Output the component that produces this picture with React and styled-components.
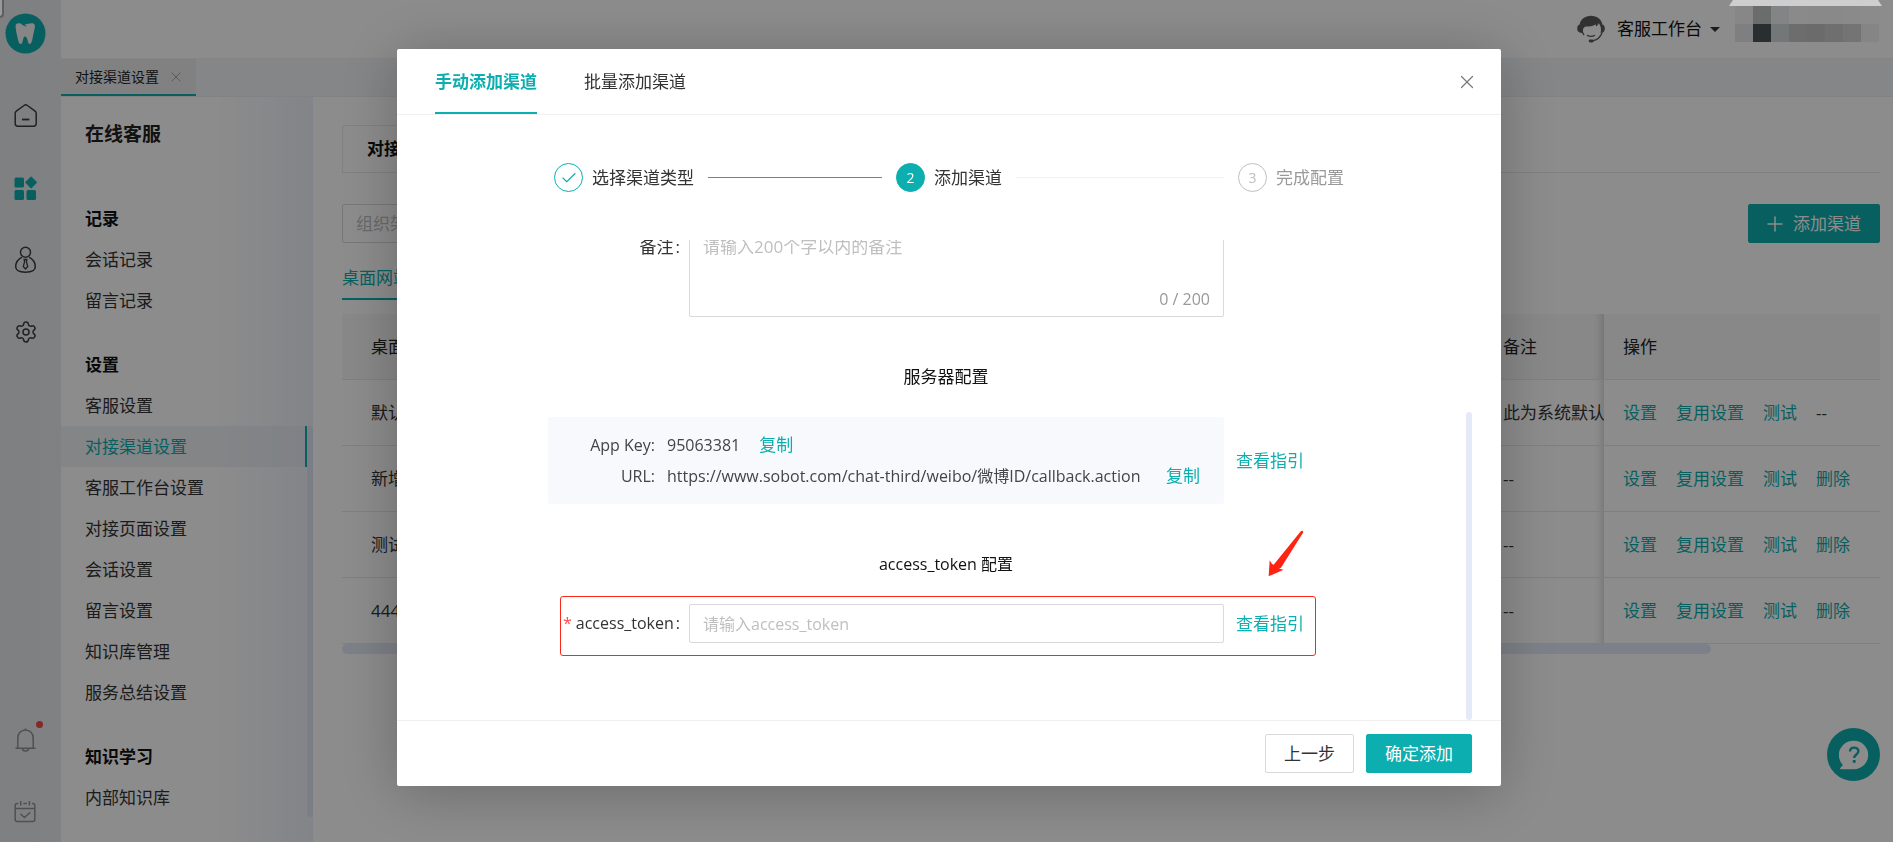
import React from 'react'
import styled, { createGlobalStyle, css } from 'styled-components'
import { Check, Plus, Settings, X } from 'lucide-react'

const PRIMARY = '#0daeaf'
const SCROLLBAR = '#e4eaf7'

const GlobalStyle = createGlobalStyle`
  * {
    box-sizing: border-box;
  }

  body {
    margin: 0;
    overflow: hidden;
    background: #fff;
    color: #333;
    font-family: 'Open Sans', 'Noto Sans CJK SC', sans-serif;
    font-size: 17px;
    line-height: 24px;
  }

  button, input, textarea {
    font: inherit;
    color: inherit;
  }

  button {
    padding: 0;
    border: 0;
    background: none;
    cursor: pointer;
  }

  a {
    color: ${PRIMARY};
    text-decoration: none;
    white-space: nowrap;
  }

  svg {
    display: block;
  }
`

/* ---------- page shell ---------- */

const Shell = styled.div`
  display: flex;
  height: 100vh;
`

const Rail = styled.aside`
  display: flex;
  flex: 0 0 61px;
  flex-direction: column;
  align-items: center;
  padding: 13px 10px 18px 0;
  background: linear-gradient(90deg, #e7e9eb, #e9ebed);
`

const RailGroup = styled.nav`
  display: flex;
  flex-direction: column;
  gap: 48px;
  margin-top: ${(p) => (p.$bottom ? 'auto' : '50px')};
`

const RailButton = styled.button`
  position: relative;
  width: 24px;
  height: 24px;
  color: ${(p) => (p.$active ? PRIMARY : p.$muted ? '#8f9294' : '#3c3d3f')};
`

const Dot = styled.span`
  position: absolute;
  top: -7px;
  right: -5px;
  width: 7px;
  height: 7px;
  border-radius: 50%;
  background: #fa4646;
`

const Column = styled.div`
  display: flex;
  flex: 1;
  flex-direction: column;
  min-width: 0;
`

const TopBar = styled.header`
  display: flex;
  flex: 0 0 59px;
  align-items: center;
  justify-content: flex-end;
  padding-right: 14px;
  border-bottom: 1px solid #f0f1f3;
`

const Workbench = styled.button`
  display: flex;
  align-items: center;
  gap: 12px;
  margin-right: 15px;
  color: #111;
`

const Caret = styled.span`
  border: 5px solid transparent;
  border-top-color: #333;
  border-bottom: 0;
  margin-left: -4px;
`

const Mosaic = styled.div`
  display: grid;
  grid-template-columns: repeat(8, 18px);
  grid-auto-rows: 18px;
  margin-top: -10px;
`

const Tile = styled.span`
  background: ${(p) => p.$color};
`

const TabStrip = styled.div`
  display: flex;
  flex: 0 0 37px;
  border-bottom: 1px solid #e9edf2;
  background: #f1f4f8;
`

const PageTab = styled.div`
  display: flex;
  align-items: center;
  gap: 9px;
  height: 37px;
  padding: 0 12px 0 14px;
  border-bottom: 2px solid ${PRIMARY};
  background: #ebeced;
  font-size: 14px;
  color: #222;
`

const CloseIcon = styled(X)`
  color: ${(p) => p.$tone};
`

const Main = styled.div`
  display: flex;
  flex: 1;
  min-height: 0;
`

/* ---------- side menu ---------- */

const Menu = styled.aside`
  display: flex;
  flex: 0 0 252px;
  background: linear-gradient(90deg, #fff 62%, #eef1fa 100%);
`

const MenuScroll = styled.nav`
  flex: 1;
  overflow: hidden;
`

const Thumb = styled.div`
  flex: 0 0 6px;
  margin: 329px 0 25px;
  border-radius: 3px;
  background: #e1e6f5;
`

const MenuTitle = styled.h1`
  margin: 23px 0 50px;
  padding-left: 24px;
  font-size: 19px;
  line-height: 28px;
  color: #222;
`

const MenuSection = styled.section`
  margin-bottom: 23px;
`

const MenuHeading = styled.h2`
  margin: 0;
  padding-left: 24px;
  font-size: 17px;
  line-height: 41px;
  color: #111;
`

const MenuLink = styled.a`
  display: block;
  padding-left: 24px;
  border-right: 2px solid transparent;
  line-height: 41px;
  color: #333;

  ${(p) =>
    p.$active &&
    css`
      border-color: ${PRIMARY};
      background: rgba(223, 230, 238, 0.5);
      color: ${PRIMARY};
    `}
`

/* ---------- channel list ---------- */

const Content = styled.main`
  flex: 1;
  min-width: 0;
  padding: 28px 13px 0 29px;
`

const CardTabs = styled.div`
  display: flex;
  border-bottom: 1px solid #e9e9e9;
`

const CardTab = styled.button`
  height: 47px;
  padding: 0 24px;
  border: 1px solid #e9e9e9;
  border-bottom: 0;
  border-radius: 3px 3px 0 0;
  font-weight: 700;
  color: #111;
`

const Toolbar = styled.div`
  display: flex;
  justify-content: space-between;
  margin-top: 31px;
`

const controlBox = css`
  height: 39px;
  border: 1px solid #d9d9d9;
  border-radius: 2px;
  outline: 0;
  background: #fff;

  &::placeholder {
    color: #bfbfbf;
  }
`

const SearchInput = styled.input`
  ${controlBox}
  width: 240px;
  padding: 0 13px;
`

const Button = styled.button`
  display: flex;
  align-items: center;
  gap: 10px;
  height: 39px;
  padding: 0 18px;
  border: 1px solid ${(p) => (p.$primary ? PRIMARY : '#d9d9d9')};
  border-radius: 2px;
  background: ${(p) => (p.$primary ? PRIMARY : '#fff')};
  color: ${(p) => (p.$primary ? '#fff' : '#333')};
`

// trims the empty rim of the glyph
const PlusIcon = styled(Plus)`
  margin: 0 -4px;
`

const TypeTabs = styled.div`
  display: flex;
  margin-top: 22px;
`

const TypeTab = styled.button`
  height: 35px;
  padding-bottom: 8px;
  border-bottom: 2px solid ${PRIMARY};
  color: ${PRIMARY};
`

const Table = styled.table`
  width: 100%;
  margin-top: 14px;
  border-collapse: separate;
  border-spacing: 0;
  table-layout: fixed;

  th, td {
    height: 66px;
    padding: 0 0 0 29px;
    overflow: hidden;
    border-bottom: 1px solid #e8e8e8;
    text-align: left;
    font-weight: 400;
    white-space: nowrap;
  }

  th {
    background: #f7f7f7;
    color: #222;
  }

  th:nth-child(2), td:nth-child(2) {
    width: 130px;
    box-shadow: inset -10px 0 8px -8px rgba(0, 0, 0, 0.18);
  }

  th:last-child, td:last-child {
    width: 276px;
    padding-left: 19px;
  }
`

const Actions = styled.div`
  display: flex;
  gap: 19px;
`

const TableThumb = styled.div`
  width: 89%;
  height: 10px;
  border-radius: 5px;
  background: ${SCROLLBAR};
`

const HelpButton = styled.button`
  position: fixed;
  right: 13px;
  bottom: 61px;
  display: grid;
  place-items: center;
  width: 53px;
  height: 53px;
  border-radius: 50%;
  background: ${PRIMARY};
  color: #fff;
`

/* ---------- dialog ---------- */

const Mask = styled.div`
  position: fixed;
  inset: 0;
  display: flex;
  justify-content: center;
  padding: 49px 0 56px 5px;
  background: rgba(0, 0, 0, 0.45);
`

const Dialog = styled.div`
  display: flex;
  flex-direction: column;
  width: min(1104px, 92vw);
  border-radius: 2px;
  background: #fff;
  box-shadow: 0 6px 60px rgba(0, 0, 0, 0.25);
`

const DialogHeader = styled.header`
  display: flex;
  flex: 0 0 66px;
  gap: 47px;
  padding: 0 23px 0 38px;
  border-bottom: 1px solid #f0f0f0;
`

const DialogTab = styled.button`
  border-top: 2px solid transparent;
  border-bottom: 2px solid ${(p) => (p.$active ? PRIMARY : 'transparent')};
  font-weight: ${(p) => (p.$active ? 700 : 400)};
  color: ${(p) => (p.$active ? PRIMARY : '#333')};
`

const CloseButton = styled.button`
  margin-left: auto;
`

const Steps = styled.ol`
  display: flex;
  margin: 0;
  padding: 48px 157px;
  list-style: none;
`

const Step = styled.li`
  display: flex;
  flex: 1;
  align-items: center;
  gap: 9px;
  color: ${(p) => (p.$status === 'wait' ? '#999' : '#333')};

  &:last-child {
    flex: none;
  }

  &:not(:last-child)::after {
    content: '';
    flex: 1;
    height: 1px;
    margin: 0 14px 0 5px;
    background: ${(p) => (p.$status === 'done' ? PRIMARY : '#f0f0f0')};
  }
`

const StepMark = styled.span`
  display: grid;
  place-items: center;
  width: 29px;
  height: 29px;
  border: 1px solid ${(p) => (p.$status === 'wait' ? '#bfbfbf' : PRIMARY)};
  border-radius: 50%;
  background: ${(p) => (p.$status === 'active' ? PRIMARY : '#fff')};
  font-size: 14px;
  color: ${(p) => ({ done: PRIMARY, active: '#fff', wait: '#bfbfbf' })[p.$status]};
`

const DialogBody = styled.div`
  display: flex;
  flex: 1;
  justify-content: space-between;
  min-height: 0;
  padding: 0 29px 0 151px;
  overflow: hidden;
`

// anchored to its end, so the first field is scrolled partly out of view
const Form = styled.form`
  display: flex;
  flex: 0 1 796px;
  flex-direction: column;
  justify-content: flex-end;
  padding-bottom: 77px;
`

const BodyThumb = styled.div`
  width: 6px;
  margin-top: 172px;
  border-radius: 3px;
  background: ${SCROLLBAR};
`

const FieldRow = styled.div`
  position: relative;
  display: flex;
  align-items: ${(p) => (p.$top ? 'flex-start' : 'center')};
`

const Label = styled.label`
  flex: 0 0 141px;
  padding-right: 9px;
  font-size: ${(p) => (p.$latin ? '16px' : '17px')};
  line-height: 39px;
  text-align: right;
  white-space: nowrap;

  &::after {
    content: ':';
    margin-left: 2px;
  }
`

const Required = styled.span`
  margin-right: 4px;
  color: #ff4d4f;
`

const Control = styled.div`
  position: relative;
  flex: 0 1 535px;
`

const TextInput = styled.input`
  ${controlBox}
  display: block;
  width: 100%;
  padding: 0 13px;
  font-size: 16px;
`

const TextArea = styled.textarea`
  ${controlBox}
  display: block;
  width: 100%;
  height: 90px;
  padding: 7px 13px;
  resize: none;
`

const Counter = styled.span`
  position: absolute;
  right: 14px;
  bottom: 6px;
  font-size: 16px;
  color: #999;
`

const Guide = styled.a`
  margin-left: 12px;
`

const GroupTitle = styled.h3`
  margin: 48px 0 28px;
  font-size: ${(p) => (p.$latin ? '16px' : '17px')};
  font-weight: 400;
  line-height: 24px;
  text-align: center;
  color: #111;
`

const ServerBox = styled.dl`
  display: grid;
  flex: 0 1 676px;
  grid-template-columns: 107px 1fr;
  grid-auto-rows: 31px;
  column-gap: 12px;
  align-items: center;
  height: 87px;
  margin: 0;
  padding: 12px 24px 13px 0;
  border-radius: 2px;
  background: #f7f9fd;
  font-size: 16px;
`

const Term = styled.dt`
  text-align: right;
  color: #444;
`

const Value = styled.dd`
  display: flex;
  gap: 19px;
  margin: 0;
  justify-content: ${(p) => (p.$spread ? 'space-between' : 'flex-start')};
  white-space: nowrap;
  color: #444;
`

const CopyButton = styled.button`
  font-size: 17px;
  color: ${PRIMARY};
`

const Highlight = styled.span`
  position: absolute;
  top: -8px;
  right: 28px;
  bottom: -13px;
  left: 12px;
  border: 1px solid #fb2817;
  border-radius: 3px;
  pointer-events: none;
`

const Arrow = styled.svg`
  position: absolute;
  right: 39px;
  bottom: 64px;
`

const DialogFooter = styled.footer`
  display: flex;
  flex: 0 0 66px;
  align-items: center;
  justify-content: flex-end;
  gap: 12px;
  padding: 0 29px;
  border-top: 1px solid #f0f0f0;
`

/* ---------- window edges above the mask ---------- */

const TopNotch = styled.div`
  position: fixed;
  top: 0;
  right: 11px;
  width: 153px;
  height: 6px;
  background: #cecece;
  clip-path: polygon(4px 0, 149px 0, 100% 100%, 0 100%);
`

const CornerNotch = styled.div`
  position: fixed;
  top: 0;
  left: 0;
  width: 4px;
  height: 18px;
  border-right: 2px solid #5f5f5f;
  border-bottom: 2px solid #5f5f5f;
  border-radius: 0 0 4px 0;
  background: #999;
`

/* ---------- icons ---------- */

const LogoIcon = () => (
  <svg width="41" height="41" viewBox="0 0 41 41" aria-hidden="true">
    <circle cx="20.5" cy="20.5" r="20" fill={PRIMARY} />
    <path
      d="M10.6 13.6C10.3 10.2 13 9.6 15.6 10.6c1.500 1.400 3.800 2.600 6.600 3.200-1.300-.9-2.200-1.500-2.600-2.200 3.200-.5 5.200-1.700 8-1.300 2 .3 2.600 2 2.200 4.300-.3 2.400-1 4.500-1.500 7-.8 3.800-1.300 9.400-3.500 9.400-2.400 0-1.800-7.600-4.800-7.600-2.700 0-1.600 7.600-4.200 7.600-2.600 0-3-6.200-3.900-9.300-.6-2.700-1.100-4.800-1.300-8.100z"
      fill="#f4f4f4"
    />
  </svg>
)

const HomeIcon = () => (
  <svg width="24" height="24" viewBox="0 0 24 24" fill="none" stroke="currentColor" strokeWidth="1.5">
    <path d="M1.2 9.2c0-.9.4-1.6 1.1-2.1L10 1.5c1-.8 2.4-.8 3.4 0l7.7 5.6c.7.5 1.1 1.2 1.1 2.1V19.6c0 1.6-1 2.7-2.6 2.7H3.800c-1.600 0-2.600-1.100-2.600-2.700z" />
    <path d="M8 15.5h7.4" strokeWidth="1.8" />
  </svg>
)

const AppsIcon = () => (
  <svg width="24" height="24" viewBox="0 0 24 24" fill="currentColor">
    <rect x="0.5" y="1.5" width="9.5" height="10" rx="1.5" />
    <rect x="0.5" y="14" width="9.5" height="10" rx="1.5" />
    <rect x="12.5" y="14" width="9.5" height="10" rx="1.5" />
    <rect x="12.7" y="2" width="8.8" height="8.8" rx="1" transform="rotate(45 17.1 6.4)" />
  </svg>
)

const PersonIcon = () => (
  <svg width="24" height="24" viewBox="0 2 24 24" overflow="visible" fill="none" stroke="currentColor" strokeWidth="1.5">
    <circle cx="11.5" cy="6.3" r="5" />
    <path d="M8 11.2C4 13.200 1.700 16.800 1.700 20.800c0 3.800 4 5.400 9.800 5.400s9.800-1.600 9.800-5.400c0-4-2.300-7.600-6.300-9.600" />
    <path d="M10.100 13.500h2.800l-.5 2.200 1.300 4.800-2.200 2.500-2.200-2.500 1.300-4.800z" strokeWidth="1.3" />
  </svg>
)

const BellIcon = () => (
  <svg width="24" height="24" viewBox="0 0 24 24" fill="none" stroke="currentColor" strokeWidth="1.5">
    <path d="M1.500 20.200h20M3.800 20V10.200C3.800 5.400 7 2 11.500 2s7.700 3.400 7.700 8.200V20M11.500 2V.5M8.500 20.500c0 3.400 6 3.400 6 0" />
  </svg>
)

const CalendarIcon = () => (
  <svg width="24" height="24" viewBox="0 0 24 24" fill="none" stroke="currentColor" strokeWidth="1.5">
    <path d="M4.300 3.500H3.200C2 3.500 1.200 4.300 1.200 5.500V19.500c0 1.300.8 2 2 2h15.600c1.300 0 2-.7 2-2V5.500c0-1.200-.7-2-2-2h-.9M9.300 3.500h3.700M1.200 8.600h19.600M6.700 1v4.600M15.400 1v4.600M6.400 13.800l4 3.700 5.900-5.200" />
  </svg>
)

const AgentIcon = () => (
  <svg width="28" height="28" viewBox="0 0 28 28" aria-hidden="true">
    <path
      d="M2.600 9.600C3.400 4.400 8 .8 14 .8s10.600 3.600 11.400 8.800c1.600.5 2.400 1.700 2.400 4s-.8 3.600-2.300 4.100l-1.900.2c.9-4.400.3-6.500-1.900-9.800-.5 1.700-1.300 2.700-2.600 3.400-.4-.6-.3-1.300-.3-2.200-2.700 2.200-6.500 2.300-10.300 2.300-2.400 1-3 3-2.300 6.700l-2.600-.5C1.100 17.400.2 16 .2 13.600s.8-3.600 2.400-4z"
      fill="#5a5a5a"
    />
    <path d="M5.500 17.500c.4 1 .9 1.800 1.600 2.500M10 20.300c2.400 1.400 5.600 1.400 8 0M25 17.800c-1.600 4.600-5 7.400-9.600 8" fill="none" stroke="#5a5a5a" strokeWidth="1.3" />
    <rect x="11.7" y="24.6" width="5" height="2.8" rx="1.4" fill="#5a5a5a" />
  </svg>
)

const HelpIcon = () => (
  <svg width="30" height="30" viewBox="0 0 30 30" aria-hidden="true">
    <path d="M15 .8a14.200 14.200 0 1 1 0 28.400H1.800c-.8 0-1-.8-.5-1.300l2.600-3A14.200 14.200 0 0 1 15 .8z" fill="#fff" />
    <path d="M11 11.600c0-5.200 8.400-5.200 8.400-.4 0 3.200-4.200 3.400-4.200 6.800" fill="none" stroke={PRIMARY} strokeWidth="2.4" />
    <rect x="13.8" y="20" width="2.8" height="2.8" fill={PRIMARY} />
  </svg>
)

/* ---------- data ---------- */

const MENU = [
  { title: '记录', items: ['会话记录', '留言记录'] },
  {
    title: '设置',
    items: [
      '客服设置',
      '对接渠道设置',
      '客服工作台设置',
      '对接页面设置',
      '会话设置',
      '留言设置',
      '知识库管理',
      '服务总结设置',
    ],
  },
  { title: '知识学习', items: ['内部知识库'] },
]

const CHANNELS = [
  { name: '默认', note: '此为系统默认', removable: false },
  { name: '新增', note: '--', removable: true },
  { name: '测试', note: '--', removable: true },
  { name: '444', note: '--', removable: true },
]

const STEPS = [
  { title: '选择渠道类型', status: 'done' },
  { title: '添加渠道', status: 'active' },
  { title: '完成配置', status: 'wait' },
]

const TILES = [
  '#f4f6f5', '#c2c6c4', '#eef0f2', '#fbfbfb', '#f9f9f9', '#fafafa', '#fcfcfc', '#fefefe',
  '#e6e8ea', '#4b565a', '#d2d9db', '#c6c6c6', '#c4c4c4', '#cacaca', '#d3d3d3', '#f2f2f2',
]

/* ---------- parts ---------- */

const SideRail = () => (
  <Rail>
    <LogoIcon />
    <RailGroup aria-label="主导航">
      <RailButton aria-label="首页"><HomeIcon /></RailButton>
      <RailButton aria-label="应用" $active><AppsIcon /></RailButton>
      <RailButton aria-label="客户"><PersonIcon /></RailButton>
      <RailButton aria-label="设置"><Settings size={24} strokeWidth={1.5} /></RailButton>
    </RailGroup>
    <RailGroup aria-label="通知" $bottom>
      <RailButton aria-label="消息" $muted><BellIcon /><Dot /></RailButton>
      <RailButton aria-label="日程" $muted><CalendarIcon /></RailButton>
    </RailGroup>
  </Rail>
)

const SideMenu = () => (
  <Menu>
    <MenuScroll>
      <MenuTitle>在线客服</MenuTitle>
      {MENU.map((section) => (
        <MenuSection key={section.title}>
          <MenuHeading>{section.title}</MenuHeading>
          {section.items.map((item) => (
            <MenuLink key={item} href="#" $active={item === '对接渠道设置'}>{item}</MenuLink>
          ))}
        </MenuSection>
      ))}
    </MenuScroll>
    <Thumb />
  </Menu>
)

const ChannelList = () => (
  <Content>
    <CardTabs>
      <CardTab>对接渠道</CardTab>
    </CardTabs>
    <Toolbar>
      <SearchInput placeholder="组织架构" aria-label="组织架构" />
      <Button $primary>
        <PlusIcon size={24} strokeWidth={1.5} />
        添加渠道
      </Button>
    </Toolbar>
    <TypeTabs>
      <TypeTab>桌面网站</TypeTab>
    </TypeTabs>
    <Table>
      <thead>
        <tr>
          <th>桌面网站</th>
          <th>备注</th>
          <th>操作</th>
        </tr>
      </thead>
      <tbody>
        {CHANNELS.map((channel) => (
          <tr key={channel.name}>
            <td>{channel.name}</td>
            <td>{channel.note}</td>
            <td>
              <Actions>
                <a href="#">设置</a>
                <a href="#">复用设置</a>
                <a href="#">测试</a>
                {channel.removable ? <a href="#">删除</a> : <span>--</span>}
              </Actions>
            </td>
          </tr>
        ))}
      </tbody>
    </Table>
    <TableThumb />
  </Content>
)

const AddChannelDialog = () => (
  <Mask>
    <Dialog role="dialog" aria-modal="true" aria-label="添加渠道">
      <DialogHeader>
        <DialogTab $active>手动添加渠道</DialogTab>
        <DialogTab>批量添加渠道</DialogTab>
        <CloseButton aria-label="关闭">
          <CloseIcon size={22} strokeWidth={1.3} $tone="#777" />
        </CloseButton>
      </DialogHeader>

      <Steps>
        {STEPS.map((step, index) => (
          <Step key={step.title} $status={step.status}>
            <StepMark $status={step.status}>
              {step.status === 'done' ? <Check size={18} strokeWidth={1.5} /> : index + 1}
            </StepMark>
            {step.title}
          </Step>
        ))}
      </Steps>

      <DialogBody>
        <Form>
          <FieldRow $top>
            <Label htmlFor="remark">备注</Label>
            <Control>
              <TextArea id="remark" placeholder="请输入200个字以内的备注" />
              <Counter>0 / 200</Counter>
            </Control>
          </FieldRow>

          <GroupTitle>服务器配置</GroupTitle>
          <FieldRow>
            <ServerBox>
              <Term>App Key:</Term>
              <Value>
                95063381
                <CopyButton type="button">复制</CopyButton>
              </Value>
              <Term>URL:</Term>
              <Value $spread>
                https://www.sobot.com/chat-third/weibo/微博ID/callback.action
                <CopyButton type="button">复制</CopyButton>
              </Value>
            </ServerBox>
            <Guide href="#">查看指引</Guide>
          </FieldRow>

          <GroupTitle $latin>access_token 配置</GroupTitle>
          <FieldRow>
            <Label htmlFor="token" $latin>
              <Required>*</Required>
              access_token
            </Label>
            <Control>
              <TextInput id="token" placeholder="请输入access_token" />
            </Control>
            <Guide href="#">查看指引</Guide>
            <Highlight />
            <Arrow width="38" height="50" viewBox="0 0 114 150" aria-hidden="true">
              <path d="M107 5 109 10 42 116 36 119 50 122 5 142 8 94 15 105 20 107 102 6z" fill="#ff2412" />
            </Arrow>
          </FieldRow>
        </Form>
        <BodyThumb />
      </DialogBody>

      <DialogFooter>
        <Button>上一步</Button>
        <Button $primary>确定添加</Button>
      </DialogFooter>
    </Dialog>
  </Mask>
)

const App = () => (
  <>
    <GlobalStyle />
    <Shell>
      <SideRail />
      <Column>
        <TopBar>
          <Workbench>
            <AgentIcon />
            客服工作台
            <Caret />
          </Workbench>
          <Mosaic>
            {TILES.map((color, index) => (
              <Tile key={index} $color={color} />
            ))}
          </Mosaic>
        </TopBar>
        <TabStrip>
          <PageTab>
            对接渠道设置
            <CloseIcon size={16} strokeWidth={1.3} $tone="#999" />
          </PageTab>
        </TabStrip>
        <Main>
          <SideMenu />
          <ChannelList />
        </Main>
      </Column>
    </Shell>
    <HelpButton aria-label="帮助"><HelpIcon /></HelpButton>
    <AddChannelDialog />
    <TopNotch />
    <CornerNotch />
  </>
)

export default App
